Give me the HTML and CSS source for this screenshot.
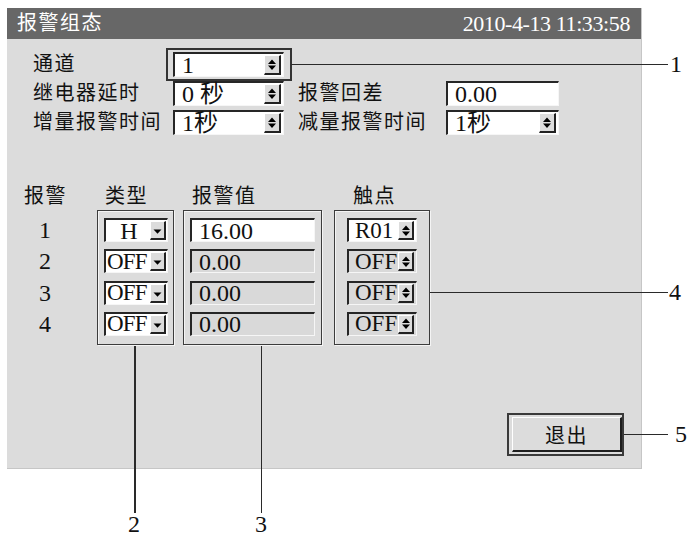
FILE: index.html
```html
<!DOCTYPE html>
<html lang="zh">
<head>
<meta charset="utf-8">
<link rel="stylesheet" href="styles.css">
</head>
<body>
<div class="figure">
  <div class="panel">
    <div class="titlebar">
      <span class="title">报警组态</span>
      <span class="clock">2010-4-13 11:33:58</span>
    </div>

    <div class="form">
      <span class="lbl">通道</span>
      <div class="hl">
        <div class="sel w111"><span class="val">1</span><span class="spin"><svg width="10" height="13" viewBox="0 0 10 13"><path d="M5 1.5L9 6H1Z M1 7.5H9L5 12Z" fill="#000"/></svg></span></div>
      </div>
      <span></span><span></span>

      <span class="lbl">继电器延时</span>
      <div class="sel w111"><span class="val">0 秒</span><span class="spin"><svg width="10" height="13" viewBox="0 0 10 13"><path d="M5 1.5L9 6H1Z M1 7.5H9L5 12Z" fill="#000"/></svg></span></div>
      <span class="lbl lbl2">报警回差</span>
      <div class="sel w113"><span class="val">0.00</span></div>

      <span class="lbl">增量报警时间</span>
      <div class="sel w111"><span class="val">1秒</span><span class="spin"><svg width="10" height="13" viewBox="0 0 10 13"><path d="M5 1.5L9 6H1Z M1 7.5H9L5 12Z" fill="#000"/></svg></span></div>
      <span class="lbl lbl2">减量报警时间</span>
      <div class="sel w113"><span class="val">1秒</span><span class="spin"><svg width="10" height="13" viewBox="0 0 10 13"><path d="M5 1.5L9 6H1Z M1 7.5H9L5 12Z" fill="#000"/></svg></span></div>
    </div>

    <div class="alarms">
      <div class="col col-num">
        <div class="head">报警</div>
        <div class="rows num-rows">
          <div class="num">1</div>
          <div class="num">2</div>
          <div class="num">3</div>
          <div class="num">4</div>
        </div>
      </div>

      <div class="col col-type">
        <div class="head">类型</div>
        <div class="group rows">
          <div class="sel tsel"><span class="val center">H</span><span class="drop"><svg width="9" height="5" viewBox="0 0 9 5"><path d="M0.5 0.5H8.5L4.5 4.8Z" fill="#000"/></svg></span></div>
          <div class="sel tsel"><span class="val tight">OFF</span><span class="drop"><svg width="9" height="5" viewBox="0 0 9 5"><path d="M0.5 0.5H8.5L4.5 4.8Z" fill="#000"/></svg></span></div>
          <div class="sel tsel"><span class="val tight">OFF</span><span class="drop"><svg width="9" height="5" viewBox="0 0 9 5"><path d="M0.5 0.5H8.5L4.5 4.8Z" fill="#000"/></svg></span></div>
          <div class="sel tsel"><span class="val tight">OFF</span><span class="drop"><svg width="9" height="5" viewBox="0 0 9 5"><path d="M0.5 0.5H8.5L4.5 4.8Z" fill="#000"/></svg></span></div>
        </div>
      </div>

      <div class="col col-val">
        <div class="head">报警值</div>
        <div class="group rows">
          <div class="sel vsel"><span class="val">16.00</span></div>
          <div class="sel vsel off"><span class="val">0.00</span></div>
          <div class="sel vsel off"><span class="val">0.00</span></div>
          <div class="sel vsel off"><span class="val">0.00</span></div>
        </div>
      </div>

      <div class="col col-contact">
        <div class="head">触点</div>
        <div class="group rows">
          <div class="sel csel"><span class="val">R01</span><span class="spin"><svg width="10" height="13" viewBox="0 0 10 13"><path d="M5 1.5L9 6H1Z M1 7.5H9L5 12Z" fill="#000"/></svg></span></div>
          <div class="sel csel off"><span class="val">OFF</span><span class="spin"><svg width="10" height="13" viewBox="0 0 10 13"><path d="M5 1.5L9 6H1Z M1 7.5H9L5 12Z" fill="#000"/></svg></span></div>
          <div class="sel csel off"><span class="val">OFF</span><span class="spin"><svg width="10" height="13" viewBox="0 0 10 13"><path d="M5 1.5L9 6H1Z M1 7.5H9L5 12Z" fill="#000"/></svg></span></div>
          <div class="sel csel off"><span class="val">OFF</span><span class="spin"><svg width="10" height="13" viewBox="0 0 10 13"><path d="M5 1.5L9 6H1Z M1 7.5H9L5 12Z" fill="#000"/></svg></span></div>
        </div>
      </div>
    </div>

    <div class="footer">
      <div class="btn-frame"><div class="btn">退出</div></div>
    </div>
  </div>

  <div class="callout h c1"></div><span class="tag t1">1</span>
  <div class="callout h c4"></div><span class="tag t4">4</span>
  <div class="callout h c5"></div><span class="tag t5">5</span>
  <div class="callout v c2"></div><span class="tag t2">2</span>
  <div class="callout v c3"></div><span class="tag t3">3</span>
</div>
</body>
</html>
```

FILE: styles.css
```css
* { box-sizing: border-box; }

html, body {
  margin: 0;
  background: #fff;
}

body {
  font-family: "Liberation Serif", "Noto Sans CJK SC", serif;
  color: #111;
}

.figure {
  position: relative;
  width: 688px;
  height: 537px;
  padding: 8px 0 0 7px;
}

.panel {
  width: 635px;
  height: 461px;
  background: #dcdcdc;
  border-right: 1px solid #c6c6c6;
  border-bottom: 1px solid #c6c6c6;
  display: flex;
  flex-direction: column;
}

.titlebar {
  height: 31px;
  background: #676767;
  color: #fff;
  display: flex;
  align-items: center;
  justify-content: space-between;
  padding: 0 11px 0 10px;
}

.title {
  font-size: 20px;
  letter-spacing: 1.5px;
  line-height: 31px;
}

.clock {
  font-size: 22px;
  letter-spacing: -0.4px;
  line-height: 31px;
}

/* ---------- top form ---------- */
.form {
  display: grid;
  grid-template-columns: 140px 125px 148px 113px;
  grid-auto-rows: 25px;
  row-gap: 4px;
  padding: 13px 0 0 26px;
  align-items: center;
}

.lbl {
  font-size: 20px;
  letter-spacing: 1.5px;
  line-height: 25px;
  white-space: nowrap;
}

.hl {
  position: relative;
}

.hl::before {
  content: "";
  position: absolute;
  top: -4px;
  bottom: -4px;
  left: -7px;
  right: 6px;
  border: 2px solid #333;
  pointer-events: none;
}

.sel {
  height: 25px;
  display: flex;
  align-items: center;
  background: #fff;
  border-style: solid;
  border-width: 2px 1px 1px 2px;
  border-color: #262626 #f6f6f6 #f6f6f6 #262626;
  font-size: 24px;
  line-height: 22px;
}

.sel.off {
  background: #d9d9d9;
}

.w111 { width: 111px; }
.w113 { width: 113px; }

.val {
  flex: 1 1 auto;
  min-width: 0;
  padding-left: 7px;
  white-space: nowrap;
}

.val.center {
  text-align: center;
  padding-left: 2px;
}

.val.tight {
  padding-left: 1px;
  font-size: 23px;
  letter-spacing: -0.8px;
}

.spin {
  flex: 0 0 17px;
  width: 17px;
  height: 20px;
  margin-right: 2px;
  background: #dcdcdc;
  border-style: solid;
  border-width: 1px 2px 2px 1px;
  border-color: #fff #222 #222 #fff;
  display: flex;
  align-items: center;
  justify-content: center;
}

.spin svg { display: block; flex: none; }

.drop {
  flex: 0 0 16px;
  width: 16px;
  height: 19px;
  margin-right: 1px;
  background: #dcdcdc;
  border-style: solid;
  border-width: 1px 2px 2px 1px;
  border-color: #fff #222 #222 #fff;
  display: flex;
  align-items: center;
  justify-content: center;
  padding-top: 3px;
}

.drop svg { display: block; flex: none; }

/* ---------- alarm table ---------- */
.alarms {
  display: flex;
  padding: 50px 0 0 17px;
}

.col {
  display: flex;
  flex-direction: column;
}

.head {
  font-size: 20px;
  letter-spacing: 1.5px;
  height: 22px;
  line-height: 22px;
  margin-bottom: 3px;
  white-space: nowrap;
}

.rows {
  display: flex;
  flex-direction: column;
  gap: 7.33px;
}

.group {
  border: 1px solid #3c3c3c;
  box-shadow: inset 1px 1px 0 #f4f4f4, 1px 1px 0 #f4f4f4;
  padding: 7px 6px 8px 6px;
}

.col-num { width: 73px; }
.num-rows { padding-top: 8px; width: 42px; }
.num {
  height: 24px;
  font-size: 24px;
  line-height: 24px;
  text-align: center;
}

.col-type { width: 77px; }
.col-type .head { padding-left: 8px; }

.col-val { width: 139px; margin-left: 9px; }
.col-val .head { padding-left: 9px; }

.col-contact { width: 96px; margin-left: 12px; }
.col-contact .head { padding-left: 19px; }
.col-contact .group { padding-left: 12px; padding-right: 12px; }

.tsel, .vsel, .csel { height: 24px; }
.tsel { width: 64px; }
.vsel { width: 125px; }
.csel { width: 70px; }
.csel .val { padding-left: 6px; font-size: 23px; }
.csel .spin { flex-basis: 16px; width: 16px; height: 19px; margin-right: 2px; }

/* ---------- footer ---------- */
.footer {
  margin-top: auto;
  display: flex;
  justify-content: flex-end;
  padding: 0 17px 12px 0;
}

.btn-frame {
  width: 117px;
  height: 43px;
  border: 2px solid #3a3a3a;
  padding: 2px 0 2px 3px;
}

.btn {
  width: 100%;
  height: 100%;
  background: #dcdcdc;
  border-style: solid;
  border-width: 1px 2px 2px 1px;
  border-color: #fff #1e1e1e #1e1e1e #fff;
  font-size: 20px;
  letter-spacing: 1.5px;
  display: flex;
  align-items: center;
  justify-content: center;
}

/* ---------- callouts ---------- */
.callout {
  position: absolute;
  background: #2a2a2a;
}

.callout.h { height: 1.5px; }
.callout.v { width: 1.5px; }

.c1 { left: 291px; width: 377px; top: 63.5px; }
.c4 { left: 430px; width: 238px; top: 291.5px; }
.c5 { left: 624px; width: 44px; top: 433.5px; }
.c2 { left: 134px; top: 346px; height: 167px; }
.c3 { left: 260.5px; top: 346px; height: 167px; }

.tag {
  position: absolute;
  font-size: 24px;
  line-height: 24px;
  color: #111;
}

.t1 { left: 670px; top: 52px; }
.t4 { left: 669px; top: 280px; }
.t5 { left: 675px; top: 422px; }
.t2 { left: 128px; top: 512px; }
.t3 { left: 255px; top: 512px; }
```
